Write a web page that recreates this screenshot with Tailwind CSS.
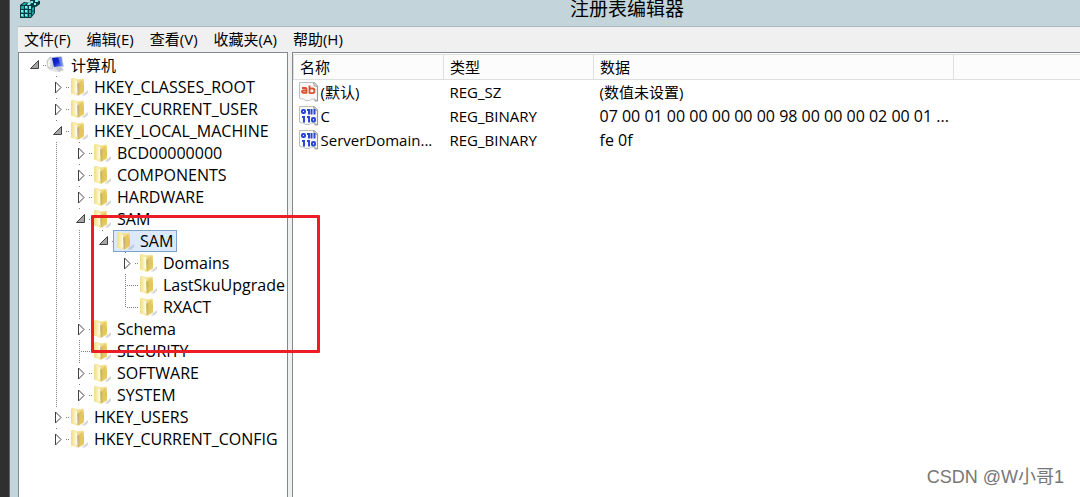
<!DOCTYPE html>
<html lang="zh-CN">
<head>
  <meta charset="UTF-8" />
  <title>注册表编辑器</title>
  <meta name="viewport" content="width=device-width, initial-scale=1" />
  <script src="https://cdn.jsdelivr.net/npm/@tailwindcss/browser@4"></script>
</head>
<body class="h-screen overflow-hidden flex bg-[#2f2f2f] text-black text-[15px] leading-[22px] font-['Open_Sans','Noto_Sans_CJK_SC',sans-serif]">

  <!-- Shared icons -->
  <svg class="absolute size-0">
    <defs>
      <linearGradient id="gBack" x1="0" y1="0" x2="1" y2="0">
        <stop offset="0" stop-color="#f0dc8c" /><stop offset="0.5" stop-color="#fbf0b8" /><stop offset="1" stop-color="#ecd478" />
      </linearGradient>
      <linearGradient id="gFront" x1="0" y1="0" x2="0" y2="1">
        <stop offset="0" stop-color="#f5e59c" /><stop offset="0.5" stop-color="#e0c258" /><stop offset="1" stop-color="#f2d974" />
      </linearGradient>
      <linearGradient id="gScreen" x1="0" y1="0" x2="1" y2="1">
        <stop offset="0" stop-color="#0a17a8" /><stop offset="0.5" stop-color="#1226d0" /><stop offset="1" stop-color="#7fa4f5" />
      </linearGradient>
      <symbol id="folder" viewBox="0 0 20 20">
        <path d="M13 18l6-5v3l-3 2.500h-3z" fill="#8c8c8c" opacity=".35" />
        <path d="M8 2.500l6-1 1 1v13l-5 3z" fill="url(#gFront)" />
        <path d="M2 2l1-1h3l2.500 1.500 1.500 15-1 1.500-7-2.500z" fill="url(#gBack)" />
        <path d="M8 6.500l2.500-.5v11.500l-1.500 1z" fill="#b5a878" opacity=".7" />
        <path d="M6.500 4h1.500v12h-1.500z" fill="#fffbe6" />
        <path d="M10.500 5l3-2v12l-3 2z" fill="#e3c65c" />
      </symbol>
      <symbol id="computer" viewBox="0 0 20 20">
        <path d="M1 6l3-4 3 1v11l-5-1z" fill="#d5d8dc" stroke="#a9adb3" stroke-width=".6" />
        <path d="M2 6l2-2v8l-2-1z" fill="#f4f5f6" />
        <path d="M5 2l11-1 2 11-10 2z" fill="#c9d0dc" />
        <path d="M6 3l9-1 2 9-9 1z" fill="url(#gScreen)" />
        <path d="M12 2.500l3-.5 2 9-2-1z" fill="#7f98f0" opacity=".8" />
        <path d="M11 13l4-1 3 3-5 2-5-2z" fill="#c4c7cb" />
        <path d="M3 14l6 0 4 2-3 1-7-2z" fill="#e2e4e7" />
      </symbol>
      <symbol id="page" viewBox="0 0 20 20">
        <path d="M.5.5h15l3 3v15h-1l-2-1.500h-3l-2 1.500h-4l-2-1.500h-2l-2-1z" fill="#f8f8f8" stroke="#bdbdbd" />
        <path d="M14.500.5l4 4v14.500M18.500 19h-2l-1-1.500" fill="none" stroke="#9a9a9a" stroke-width="1.200" />
        <path d="M15 1v3h3" fill="#fff" stroke="#9a9a9a" />
      </symbol>
      <symbol id="str" viewBox="0 0 20 20">
        <use href="#page" />
        <g fill="none" stroke="#d8502c" stroke-width="1.800">
          <path d="M3 6h3.500q1 0 1 1v4.500M7.500 8.500h-3q-1.500 0-1.500 1.200t1.500 1.200h3M10.500 3.500v8M10.500 6.500h3q2 0 2 2.300t-2 2.300h-3" />
        </g>
      </symbol>
      <symbol id="bin" viewBox="0 0 20 20">
        <use href="#page" />
        <g fill="none" stroke="#2b47d6" stroke-width="2">
          <rect x="3" y="4" width="3" height="3" rx="1" />
          <path d="M8 4h2v4.500M12.500 3v5.500M15.500 3v5.500M3 11h2v5.500M8 11h2v5.500" />
          <rect x="13" y="12" width="3" height="3.500" rx="1" />
        </g>
      </symbol>
    </defs>
  </svg>

  <!-- Window -->
  <div class="relative flex-1 min-w-0 flex flex-col ml-[9px] border-l border-[#5c6468] bg-[#c3d5da]">

    <!-- Title bar -->
    <div class="h-[26px] shrink-0 flex items-start pl-[10px]">
      <svg class="w-5 h-[18px]" viewBox="0 0 20 18">
        <path d="M0 5l4-3 6 1 5 2v8l-4 5-11 0z" fill="#063b40" />
        <path d="M10 0h5l5 1v3l-4 3-4-1z" fill="#0a4045" />
        <g fill="#1fa9a9">
          <path d="M1 6h3v3h-3zM5 6h3v3h-3zM1 10h3v3h-3zM5 10h3v3h-3zM1 14h3v3h-3zM5 14h3v3h-3zM9 14h2v3h-2zM9 10h2v3h-2z" />
          <path d="M12 8l2-1v3l-2 1zM12 12l2-1v2l-2 2zM4 3l3 0-2 2h-3z" />
        </g>
        <g fill="#7ff0ea">
          <path d="M9 6h2v3h-2zM5 6h2v2h-2zM1 10h2v2h-2zM5 10h2v2h-2zM1 14h2v2h-2zM5 14h2v2h-2zM8 3h3l-1 2h-3zM11 1h2v2h-2zM15 0h3v2h-3zM14 3h2v2h-2z" />
        </g>
      </svg>
      <h1 class="flex-1 ml-[134px] text-center text-[19px] leading-[18px]">注册表编辑器</h1>
    </div>

    <div class="flex-1 min-h-0 ml-2 flex flex-col bg-[#f0f0f0] border-t border-[#b0b8bf]">

      <!-- Menu -->
      <nav class="h-[25px] shrink-0 flex items-center gap-4 pb-px pl-[6px]">
        <button>文件(F)</button>
        <button>编辑(E)</button>
        <button>查看(V)</button>
        <button>收藏夹(A)</button>
        <button>帮助(H)</button>
      </nav>

      <div class="flex-1 min-h-0 flex gap-1">
        <!-- Key tree -->
        <div id="tree" class="w-[270px] shrink-0 pt-px pl-[2px] bg-white border border-b-0 border-[#828790] overflow-hidden"></div>

        <!-- Values -->
        <div class="flex-1 min-w-0 pt-px bg-white border-t border-l border-[#828790]">
          <table class="w-full table-fixed border-collapse text-left">
            <colgroup>
              <col class="w-[150px]" />
              <col class="w-[150px]" />
              <col class="w-[360px]" />
              <col />
            </colgroup>
            <thead>
              <tr class="h-[25px] bg-[#fcfcfc] border-y border-l border-[#dedfe1]">
                <th class="pl-[6px] font-normal border-r border-[#dedfe1]">名称</th>
                <th class="pl-[6px] font-normal border-r border-[#dedfe1]">类型</th>
                <th class="pl-[6px] font-normal border-r border-[#dedfe1]">数据</th>
                <th></th>
              </tr>
            </thead>
            <tbody id="values"></tbody>
          </table>
        </div>
      </div>
    </div>
  </div>

  <!-- Highlight and watermark -->
  <div class="absolute left-[91px] top-[215px] w-[229px] h-[138px] border-3 border-[#ee1c25] rounded-[1px] pointer-events-none"></div>
  <div class="absolute right-4 bottom-2 text-lg leading-6 text-[#777] font-['Liberation_Sans','Noto_Sans_CJK_SC',sans-serif]">CSDN @W小哥1</div>

  <script>
    // guides: one flag per ancestor column, 1 = line passes through
    const keys = [
      { name: '计算机', guides: [], state: 'open', root: true },
      { name: 'HKEY_CLASSES_ROOT', guides: [0], state: 'closed' },
      { name: 'HKEY_CURRENT_USER', guides: [0], state: 'closed' },
      { name: 'HKEY_LOCAL_MACHINE', guides: [0], state: 'open' },
      { name: 'BCD00000000', guides: [0, 1], state: 'closed' },
      { name: 'COMPONENTS', guides: [0, 1], state: 'closed' },
      { name: 'HARDWARE', guides: [0, 1], state: 'closed' },
      { name: 'SAM', guides: [0, 1], state: 'open' },
      { name: 'SAM', guides: [0, 1, 1], state: 'open', selected: true },
      { name: 'Domains', guides: [0, 1, 1, 0], state: 'closed' },
      { name: 'LastSkuUpgrade', guides: [0, 1, 1, 0], state: 'leaf' },
      { name: 'RXACT', guides: [0, 1, 1, 0], state: 'last' },
      { name: 'Schema', guides: [0, 1], state: 'closed' },
      { name: 'SECURITY', guides: [0, 1], state: 'leaf' },
      { name: 'SOFTWARE', guides: [0, 1], state: 'closed' },
      { name: 'SYSTEM', guides: [0, 1], state: 'closed' },
      { name: 'HKEY_USERS', guides: [0], state: 'closed' },
      { name: 'HKEY_CURRENT_CONFIG', guides: [0], state: 'closed' }
    ];

    const values = [
      { icon: 'str', name: '(默认)', type: 'REG_SZ', data: '(数值未设置)' },
      { icon: 'bin', name: 'C', type: 'REG_BINARY', data: '07 00 01 00 00 00 00 00 98 00 00 00 02 00 01 ...' },
      { icon: 'bin', name: 'ServerDomain...', type: 'REG_BINARY', data: 'fe 0f' }
    ];

    const line = d => `<path d="${d}" fill="none" stroke="#808080" stroke-dasharray="1 1" />`;
    const cell = body => `<svg class="w-[23px] h-[22px] shrink-0 overflow-visible" viewBox="0 0 23 22">${body}</svg>`;

    const marks = {
      open: line('M22 11.5h4') + '<path d="M17.5 6.500v8h-8z" fill="#a6a6a6" stroke="#404040" />',
      closed: line('M22 11.5h4') + '<path d="M11.500 6v11l5.500-5.500z" fill="#fff" stroke="#404040" />',
      leaf: line('M12.5 0v22') + line('M14 11.5h12'),
      last: line('M12.5 0v12') + line('M14 11.5h12')
    };

    function treeRow(k) {
      const guides = k.guides.map(g => cell(g ? line('M12.5 0v22') : '')).join('');
      const dot = k.root ? '' : line('M12.5 0v1');
      const toggle = cell(dot + marks[k.state]);
      const box = k.selected ? 'border-[#7da2ce] bg-[#dbe9fb]' : 'border-transparent';
      const size = k.root ? 'text-[15px]' : 'text-base';
      return `<div class="flex h-[22px]">
        ${guides}
        ${k.state === 'open' || k.state === 'closed' ? `<button class="flex" aria-label="${k.name}">${toggle}</button>` : toggle}
        <button class="flex items-center gap-[5px] pl-px pr-[3px] whitespace-nowrap border ${box}">
          <svg class="w-5 h-5 shrink-0"><use href="#${k.root ? 'computer' : 'folder'}" /></svg>
          <span class="${size} leading-5">${k.name}</span>
        </button>
      </div>`;
    }

    document.getElementById('tree').innerHTML = keys.map(treeRow).join('');

    document.getElementById('values').innerHTML = values.map(v => `
      <tr class="h-6 whitespace-nowrap">
        <td><div class="flex items-center gap-[2px] pl-[5px]"><svg class="w-5 h-5 shrink-0"><use href="#${v.icon}" /></svg>${v.name}</div></td>
        <td class="pl-[6px]">${v.type}</td>
        <td class="pl-[6px] ${v.icon === 'bin' ? 'text-base leading-[22px]' : ''}">${v.data}</td>
        <td></td>
      </tr>`).join('');
  </script>
</body>
</html>
